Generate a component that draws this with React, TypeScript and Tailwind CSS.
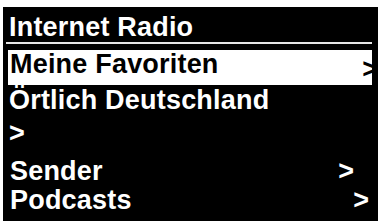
import React from "react";

const rows = [
  { label: "Sender", chevron: "mr-[18px]", mt: "mt-[11px]" },
  { label: "Podcasts", chevron: "mr-[3px]", mt: "mt-[2px]" },
];

export default function App() {
  return (
    <div
      className="w-[378px] h-[223px] bg-white pt-[7px] pl-[3px] pb-[2px] overflow-hidden"
      style={{ fontFamily: '"Liberation Sans", Arial, sans-serif' }}
    >
      <div className="h-full bg-black font-bold text-[27px] leading-[27px] text-white flex flex-col pr-[6px]">
        {/* Title */}
        <div className="pl-[3px] mt-[7px]">
          <div className="pl-[3px] tracking-[0.2px]">Internet Radio</div>
          <div className="h-[2px] bg-[#e6e6e6] mt-[1px]" />
        </div>

        {/* Selected item */}
        <div className="ml-[5px] mt-[6px] h-[35px] bg-white text-black pt-[1px] pl-[2px] flex justify-between overflow-hidden">
          <span className="tracking-[0.2px]">Meine Favoriten</span>
          <span className="mr-[-6px] mt-[5px]">&gt;</span>
        </div>

        {/* Örtlich Deutschland wraps its chevron onto the next line */}
        <div className="ml-[5px] pl-[1px] mt-[2px]">
          <div className="tracking-[0.2px]">Örtlich Deutschland</div>
          <div className="mt-[6px]">&gt;</div>
        </div>

        {rows.map((r) => (
          <div key={r.label} className={`ml-[5px] pl-[2px] flex justify-between ${r.mt}`}>
            <span className="tracking-[0.2px]">{r.label}</span>
            <span className={r.chevron}>&gt;</span>
          </div>
        ))}
      </div>
    </div>
  );
}
